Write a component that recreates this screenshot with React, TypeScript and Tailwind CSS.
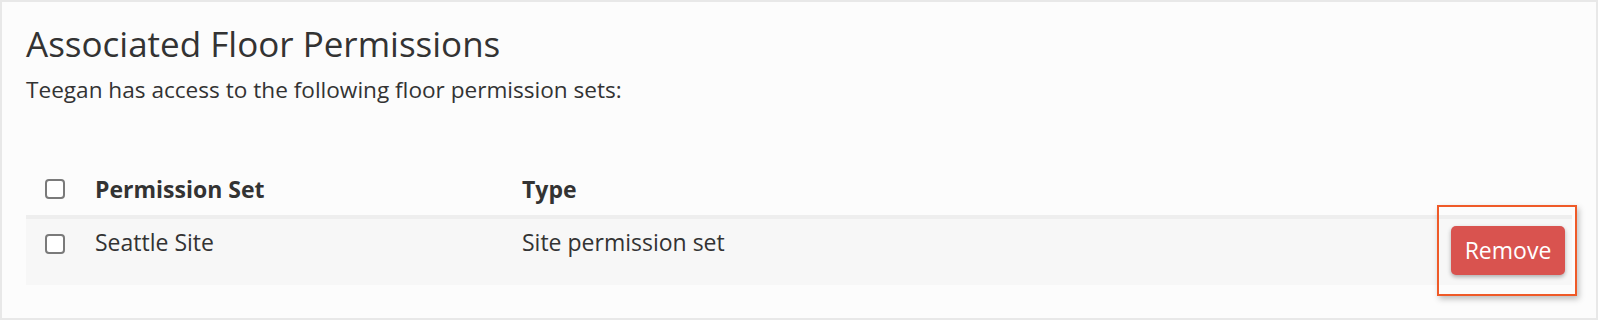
import React from "react";

interface PermissionRow {
  id: number;
  name: string;
  type: string;
}

const rows: PermissionRow[] = [{ id: 1, name: "Seattle Site", type: "Site permission set" }];

function Checkbox() {
  return <span className="block h-5 w-5 rounded-[4px] border-2 border-[#7a7a7a] bg-white" />;
}

export default function App() {
  return (
    <div
      className="h-[320px] border-2 border-[#e8e8e8] bg-[#fcfcfc] px-6 pt-[23px] text-[#333333]"
      style={{ fontFamily: '"Open Sans", "Noto Sans", sans-serif' }}
    >
      <h1 className="text-[35px] leading-[1.1] font-normal">Associated Floor Permissions</h1>
      <p className="mt-[9px] text-[22.6px] leading-[33px]">
        Teegan has access to the following floor permission sets:
      </p>

      <div className="mt-[55px]">
        {/* header */}
        <div className="flex h-[58px] items-center border-b-4 border-[#eeeeee] pt-[3px]">
          <div className="w-[69px] pl-[19px]">
            <Checkbox />
          </div>
          <div className="w-[427px] text-[23px] leading-[33px] font-bold">Permission Set</div>
          <div className="flex-1 text-[23px] leading-[33px] font-bold">Type</div>
        </div>

        {rows.map((row) => (
          <div key={row.id} className="flex h-[66px] bg-[#f7f7f7] pr-[7px]">
            <div className="w-[69px] pl-[19px] pt-[15px]">
              <Checkbox />
            </div>
            <div className="w-[427px] pt-[7px] text-[23px] leading-[33px]">{row.name}</div>
            <div className="flex-1 pt-[7px] text-[23px] leading-[33px]">{row.type}</div>
            <div className="flex items-center pb-[2px]">
              <div className="relative">
                <button className="h-[49px] w-[114px] rounded-[5px] bg-[#d9534f] text-[23px] text-white shadow-[0_2px_4px_rgba(0,0,0,0.3)]">
                  Remove
                </button>
                <span className="pointer-events-none absolute -top-[21px] -bottom-[21px] -left-[14px] -right-[12px] border-2 border-[#ef5a28] shadow-[2px_3px_6px_rgba(0,0,0,0.25)]" />
              </div>
            </div>
          </div>
        ))}
      </div>
    </div>
  );
}
